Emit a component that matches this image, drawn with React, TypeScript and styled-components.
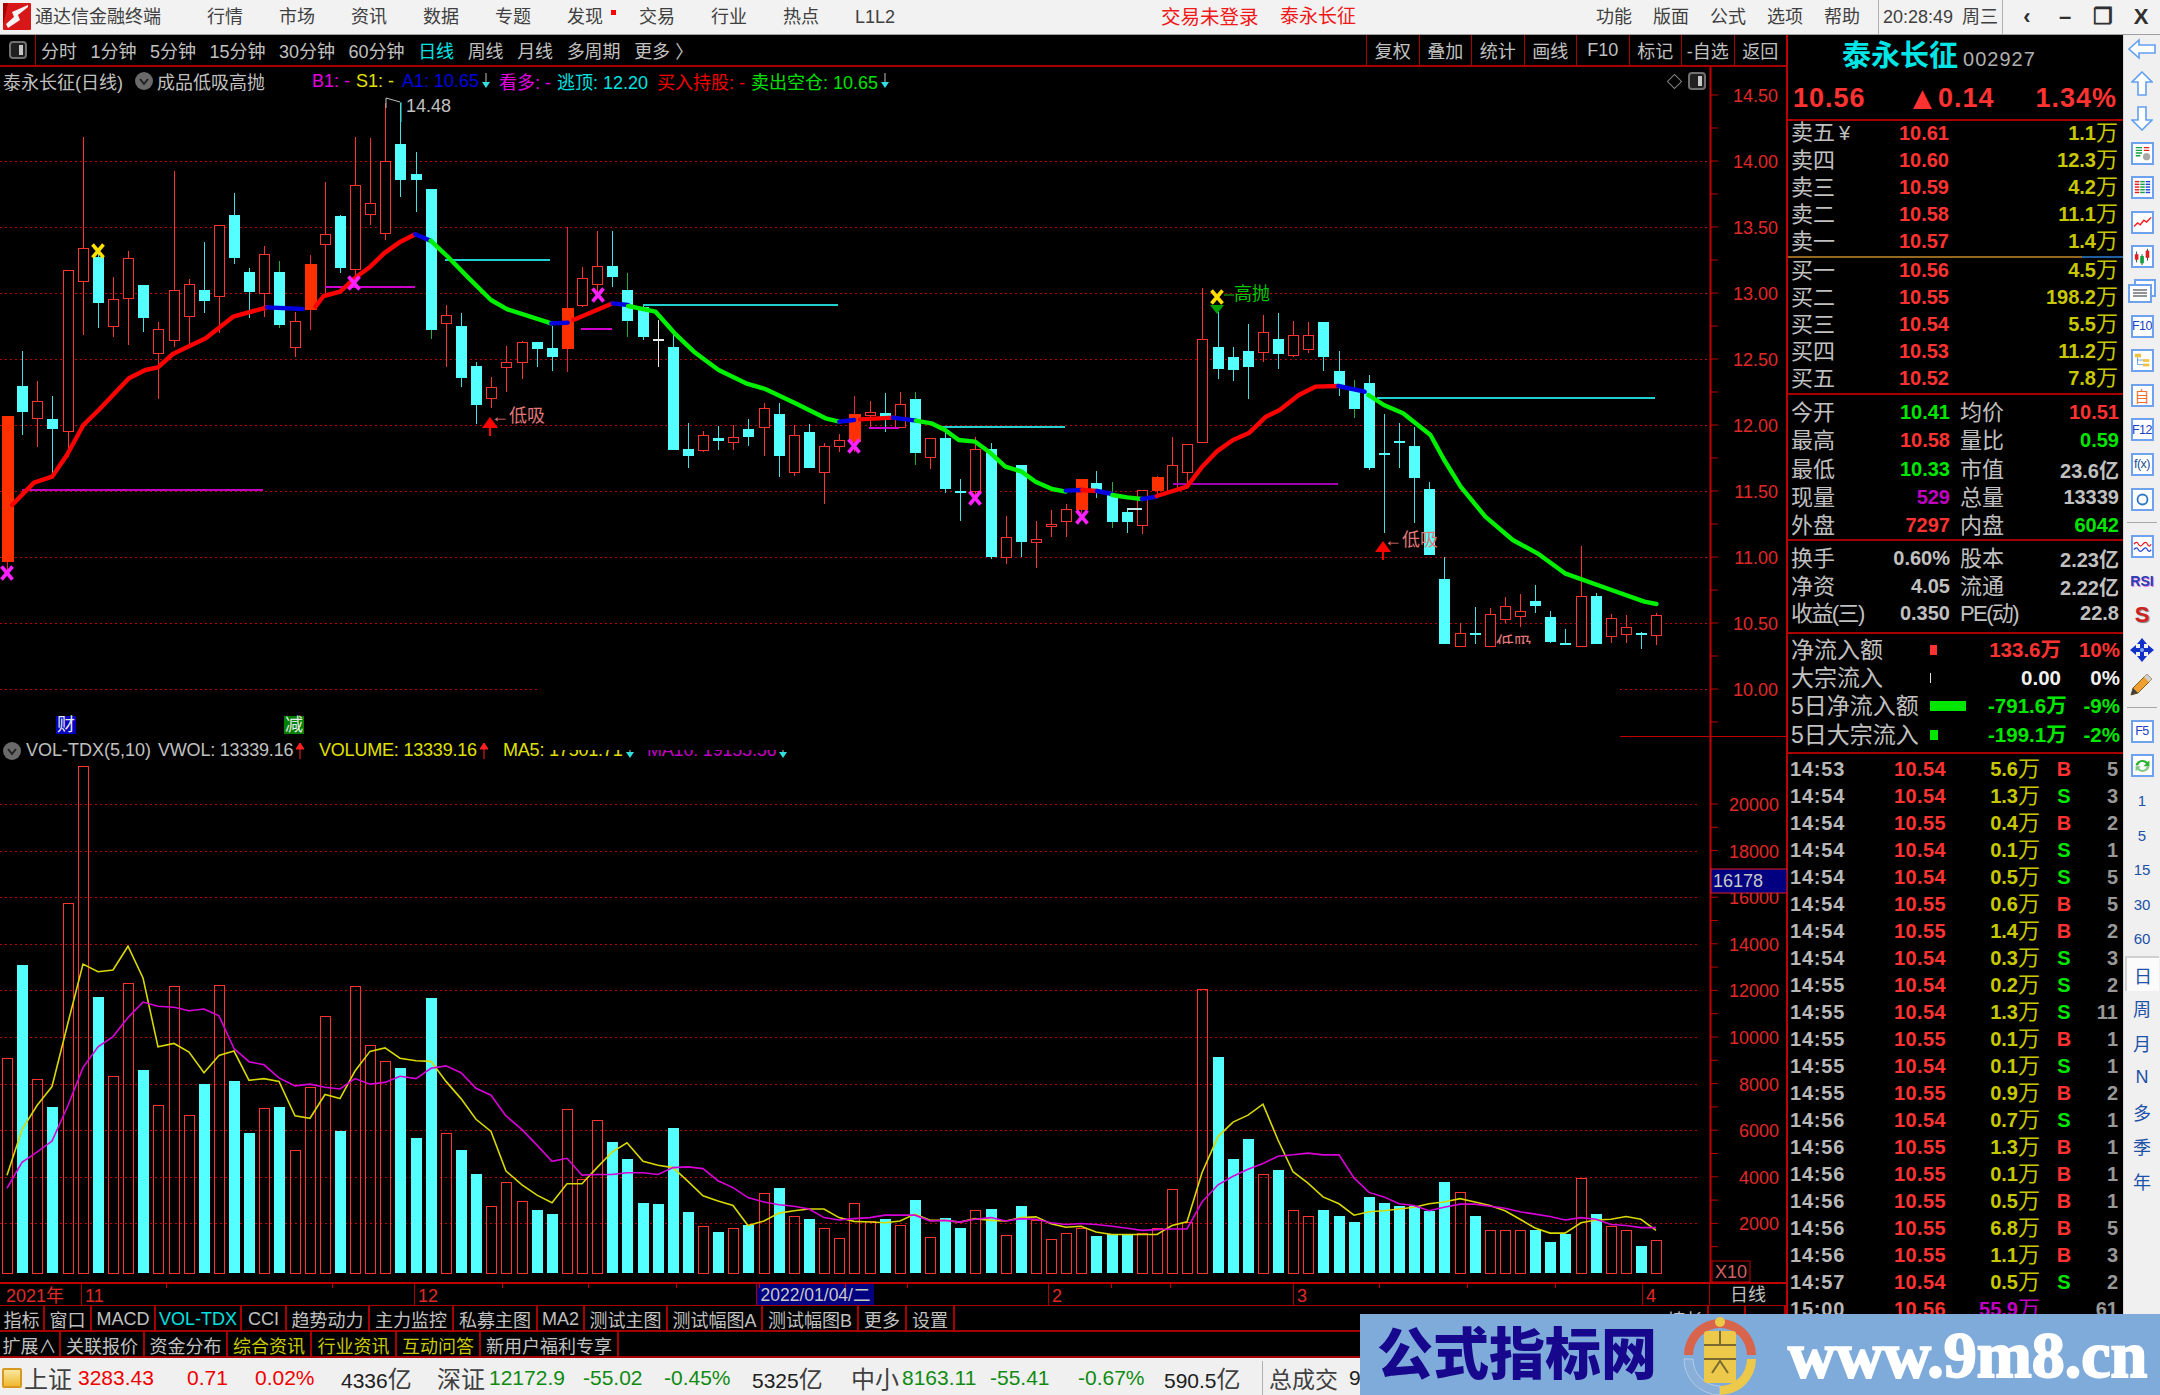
import React from "react";
import styled, { createGlobalStyle } from "styled-components";

const SANS = `"Liberation Sans", "Noto Sans CJK SC", sans-serif`;
const RED = "#ff3232";
const GREEN = "#00e600";
const OLIVE = "#c8c800";
const GRAY = "#c0c0c0";
const LINE = "#a80000";
const CYAN = "#54ffff";

const GlobalStyle = createGlobalStyle`
  html, body { margin: 0; padding: 0; background: #000; overflow: hidden; }
  * { box-sizing: border-box; }
`;

// [kind, high, top, bottom, low] read off the chart, u: hollow red, f: filled red,
// d: cyan, g: cyan with green wick, w: white doji
type Candle = [string, number, number, number, number];

const CANDLES_A: Candle[] = [
  ["f", 977, 977, 1417, 1440], ["d", 783, 887, 967, 1035], ["u", 873, 933, 985, 1070], ["d", 918, 986, 1017, 1148],
  ["u", 541, 541, 1025, 1100], ["u", 140, 474, 574, 735], ["d", 490, 500, 638, 715], ["u", 562, 627, 710, 742],
  ["u", 482, 506, 624, 765], ["d", 585, 585, 684, 725], ["u", 695, 718, 790, 927], ["u", 243, 600, 750, 770],
  ["u", 568, 582, 678, 765], ["d", 455, 600, 634, 670], ["u", 407, 407, 620, 728], ["d", 310, 374, 504, 522],
  ["d", 535, 545, 607, 685], ["u", 468, 492, 610, 680], ["g", 514, 545, 706, 715], ["u", 665, 695, 772, 800],
  ["f", 495, 523, 660, 720], ["u", 275, 434, 462, 620], ["d", 375, 378, 535, 550], ["u", 140, 285, 538, 560],
  ["u", 145, 340, 372, 405], ["u", 40, 213, 430, 450], ["d", 40, 163, 269, 320], ["d", 185, 253, 269, 365],
  ["g", 298, 298, 720, 748], ["u", 645, 677, 700, 832], ["d", 670, 707, 863, 890], ["d", 815, 829, 945, 1003],
  ["u", 860, 893, 925, 955], ["u", 767, 816, 831, 905], ["u", 752, 757, 818, 868], ["d", 755, 757, 778, 832],
  ["d", 708, 775, 801, 842], ["f", 410, 654, 778, 845], ["u", 530, 565, 646, 650], ["u", 423, 528, 584, 610],
  ["d", 423, 527, 562, 590], ["g", 550, 600, 693, 742], ["d", 645, 650, 742, 750], ["w", 690, 748, 750, 832],
  ["d", 730, 770, 1080, 1080], ["d", 1000, 1077, 1098, 1135], ["u", 1022, 1037, 1080, 1085], ["d", 1008, 1045, 1052, 1080],
  ["u", 1005, 1042, 1056, 1080], ["d", 987, 1018, 1040, 1068], ["u", 940, 956, 1012, 1098], ["d", 938, 973, 1098, 1160],
  ["u", 1005, 1037, 1147, 1157], ["d", 1003, 1027, 1135, 1135], ["u", 1060, 1068, 1147, 1242], ["u", 1032, 1050, 1070, 1085],
  ["f", 918, 973, 1055, 1085],
];

const CANDLES_B: Candle[] = [
  ["u", 392, 428, 436, 475], ["d", 370, 428, 441, 485], ["u", 365, 402, 472, 475], ["g", 365, 388, 548, 585],
  ["u", 505, 505, 562, 598], ["d", 490, 505, 657, 670], ["d", 627, 662, 669, 752], ["u", 500, 537, 665, 690],
  ["d", 518, 537, 860, 868], ["u", 738, 803, 862, 882], ["d", 586, 586, 815, 860], ["u", 752, 808, 818, 895],
  ["u", 720, 762, 769, 802], ["u", 702, 718, 755, 802], ["f", 626, 626, 720, 730], ["d", 603, 640, 662, 685],
  ["g", 635, 675, 756, 775], ["d", 715, 725, 756, 788], ["u", 660, 660, 765, 792], ["f", 618, 622, 662, 680],
  ["u", 500, 587, 660, 665], ["u", 523, 523, 606, 650], ["u", 55, 208, 517, 517], ["d", 125, 230, 297, 328],
  ["d", 230, 262, 301, 332], ["d", 163, 243, 292, 388], ["u", 135, 186, 246, 275], ["d", 130, 208, 252, 297],
  ["u", 153, 195, 255, 260], ["u", 157, 195, 237, 248], ["d", 157, 157, 261, 302], ["d", 243, 302, 350, 378],
  ["g", 330, 356, 418, 445], ["d", 316, 338, 595, 600], ["d", 432, 550, 556, 788], ["d", 460, 514, 518, 595],
  ["d", 470, 527, 625, 760], ["d", 635, 658, 855, 855], ["d", 860, 928, 1122, 1122], ["u", 1060, 1091, 1130, 1130],
  ["d", 1012, 1090, 1096, 1122], ["u", 1015, 1033, 1130, 1130], ["u", 982, 1010, 1048, 1058], ["u", 972, 1023, 1038, 1070],
  ["d", 945, 992, 1008, 1030], ["d", 1022, 1040, 1115, 1120], ["d", 1076, 1118, 1122, 1122], ["u", 828, 979, 1130, 1130],
  ["d", 968, 978, 1122, 1122], ["u", 1032, 1046, 1100, 1120], ["u", 1036, 1073, 1092, 1120], ["d", 1085, 1090, 1094, 1138],
  ["u", 1030, 1037, 1096, 1125],
];

const VOL_A = [925, 653, 985, 1063, 475, 78, 745, 977, 707, 958, 1060, 714, 1090, 998, 711, 988, 1140, 1068, 1063, 1190, 1007, 802, 1133, 714, 885, 933, 950, 1155, 748, 1142, 1190, 1258, 1352, 1282, 1338, 1363, 1376, 1072, 1275, 1103, 1166, 1216, 1342, 1346, 1124, 1368, 1412, 1428, 1417, 1407, 1316, 1298, 1381, 1390, 1417, 1447, 1343];
const VOL_B = [1395, 1390, 1408, 1333, 1442, 1386, 1416, 1364, 1359, 1438, 1350, 1392, 1448, 1430, 1416, 1437, 1434, 1434, 1430, 1416, 1304, 1400, 723, 918, 1216, 1158, 1260, 1246, 1364, 1382, 1363, 1381, 1398, 1324, 1342, 1351, 1352, 1365, 1281, 1312, 1381, 1421, 1421, 1421, 1420, 1456, 1433, 1273, 1376, 1412, 1422, 1468, 1452];

const MA5 = [1262, 1130, 1060, 1005, 820, 650, 672, 667, 598, 690, 890, 880, 905, 965, 915, 902, 987, 982, 990, 1090, 1097, 1028, 1040, 960, 903, 893, 923, 930, 932, 990, 1040, 1100, 1135, 1250, 1290, 1320, 1342, 1287, 1287, 1240, 1195, 1168, 1222, 1233, 1240, 1280, 1322, 1337, 1350, 1408, 1395, 1372, 1365, 1360, 1360, 1385, 1396,
  1398, 1400, 1395, 1375, 1393, 1393, 1398, 1388, 1393, 1395, 1385, 1383, 1403, 1413, 1410, 1427, 1434, 1434, 1434, 1434, 1408, 1397, 1255, 1150, 1108, 1088, 1056, 1160, 1252, 1285, 1325, 1345, 1378, 1368, 1365, 1360, 1355, 1345, 1340, 1330, 1340, 1350, 1365, 1390, 1415, 1430, 1430, 1400, 1392, 1390, 1382, 1390, 1422];
const MA10 = [1300, 1225, 1195, 1163, 1060, 950, 890, 860, 805, 760, 772, 775, 785, 780, 800, 895, 933, 942, 980, 1003, 998, 1007, 1012, 982, 998, 993, 975, 982, 952, 945, 965, 1010, 1030, 1090, 1130, 1175, 1222, 1213, 1262, 1260, 1260, 1255, 1255, 1260, 1240, 1238, 1243, 1278, 1298, 1327, 1340, 1348, 1352, 1360, 1385, 1392, 1388,
  1385, 1378, 1378, 1378, 1395, 1393, 1398, 1390, 1385, 1395, 1388, 1390, 1400, 1405, 1402, 1405, 1410, 1416, 1422, 1420, 1418, 1418, 1340, 1290, 1265, 1245, 1228, 1207, 1203, 1198, 1203, 1203, 1270, 1312, 1325, 1345, 1350, 1365, 1355, 1346, 1346, 1352, 1358, 1368, 1375, 1382, 1392, 1385, 1390, 1405, 1408, 1414, 1414];

// thick trend line pieces, the first block in left-half coordinates, the second in right-half ones
type Seg = { c: string; p: number[][] };
const TREND_A: Seg[] = [
  { c: "#ff0000", p: [[22, 1245], [62, 1178], [95, 1160], [122, 1095], [152, 1005], [180, 960], [235, 865], [265, 840], [288, 832], [315, 792], [375, 745], [425, 680], [487, 652]] },
  { c: "#0000e0", p: [[487, 652], [552, 657]] },
  { c: "#ff0000", p: [[575, 650], [590, 618], [620, 605], [650, 560], [675, 530], [700, 490], [730, 455], [757, 433]] },
  { c: "#0000e0", p: [[757, 433], [785, 452]] },
  { c: "#00f000", p: [[785, 452], [815, 498], [855, 565], [895, 630], [925, 658], [1005, 700]] },
  { c: "#0000e0", p: [[1005, 700], [1035, 698]] },
  { c: "#ff0000", p: [[1045, 690], [1117, 640]] },
  { c: "#0000e0", p: [[1117, 640], [1145, 645]] },
  { c: "#00f000", p: [[1145, 648], [1195, 665], [1230, 730], [1265, 785], [1310, 840], [1360, 880], [1395, 897], [1450, 940], [1505, 985], [1530, 995]] },
  { c: "#0000e0", p: [[1530, 995], [1557, 990]] },
];
const TREND_B: Seg[] = [
  { c: "#ff0000", p: [[0, 448], [60, 443]] },
  { c: "#0000e0", p: [[60, 443], [102, 452]] },
  { c: "#00f000", p: [[102, 452], [130, 460], [155, 480], [180, 510], [210, 515], [235, 545], [265, 590], [295, 605], [320, 635], [350, 657], [375, 665]] },
  { c: "#0000e0", p: [[375, 662], [405, 660]] },
  { c: "#ff0000", p: [[405, 660], [432, 663]] },
  { c: "#0000e0", p: [[432, 663], [460, 672]] },
  { c: "#00f000", p: [[460, 675], [487, 682], [514, 687]] },
  { c: "#0000e0", p: [[514, 687], [541, 680]] },
  { c: "#ff0000", p: [[541, 678], [596, 650], [624, 590], [650, 545], [680, 510], [710, 488], [740, 440], [765, 420], [800, 375], [830, 350], [872, 348]] },
  { c: "#0000e0", p: [[872, 348], [920, 365]] },
  { c: "#00f000", p: [[927, 375], [955, 405], [990, 430], [1040, 495], [1065, 570], [1095, 650], [1140, 740], [1190, 810], [1235, 850], [1285, 910], [1370, 960], [1430, 995], [1452, 1002]] },
];

const barX = (i: number) => Math.round(7.1 + 15.13 * i);
const xA = (z: number) => z / 1.823;
const yA = (z: number) => 90 + z / 3;
const xB = (z: number) => 860 + z / 1.823;
const yB = (z: number) => 270 + z / 3;

const PRICE_LABELS = ["14.50", "14.00", "13.50", "13.00", "12.50", "12.00", "11.50", "11.00", "10.50", "10.00"];
const VOL_LABELS = ["20000", "18000", "16000", "14000", "12000", "10000", "8000", "6000", "4000", "2000"];
const volLabelY = (n: number) => 804 + n * 46.6;

const CandleMark: React.FC<{ c: Candle; i: number; y: (z: number) => number }> = ({ c, i, y }) => {
  const [kind, hi, top, bot, lo] = c;
  const x = barX(i);
  const cx = x + 0.5;
  const wick = kind === "u" ? "#ff3232" : kind === "f" ? "#e8204a" : kind === "g" ? "#20b040" : kind === "w" ? "#e8e8e8" : "#40e0e0";
  if (kind === "u") {
    return (
      <g>
        <line x1={cx} x2={cx} y1={y(hi)} y2={y(top)} stroke={wick} />
        <line x1={cx} x2={cx} y1={y(bot)} y2={y(lo)} stroke={wick} />
        <rect x={x - 4.5} y={y(top)} width={10} height={y(bot) - y(top)} fill="#000" stroke="#ff3232" />
      </g>
    );
  }
  const fill = kind === "f" ? "#ff3000" : kind === "w" ? "#e8e8e8" : CYAN;
  return (
    <g>
      <line x1={cx} x2={cx} y1={y(hi)} y2={y(lo)} stroke={wick} />
      <rect x={x - 5} y={y(top)} width={kind === "f" ? 12 : 11} height={Math.max(y(bot) - y(top), 2)} fill={fill} />
    </g>
  );
};

const Cross: React.FC<{ x: number; y: number; c: string }> = ({ x, y, c }) => (
  <path d={`M${x - 5.5} ${y - 6.5}L${x + 5.5} ${y + 6.5}M${x + 5.5} ${y - 6.5}L${x - 5.5} ${y + 6.5}`} stroke={c} strokeWidth={3.6} fill="none" />
);

const BuyArrow: React.FC<{ x: number; y: number }> = ({ x, y }) => (
  <g>
    <polygon points={`${x},${y} ${x + 8},${y + 11} ${x - 8},${y + 11}`} fill="#ff0000" />
    <line x1={x} x2={x} y1={y + 10} y2={y + 19} stroke="#ff0000" strokeWidth={2} />
  </g>
);

const PricePane: React.FC = () => (
  <ChartSvg width={1787} height={670} viewBox="0 67 1787 670">
    <g stroke="#c00000" strokeDasharray="2 3" shapeRendering="crispEdges">
      {[161, 227, 293, 359, 425, 491, 557, 623].map((y) => (
        <line key={y} x1={0} x2={1708} y1={y + 0.5} y2={y + 0.5} />
      ))}
      <line x1={0} x2={540} y1={689.5} y2={689.5} />
      <line x1={1620} x2={1708} y1={689.5} y2={689.5} />
    </g>
    <g shapeRendering="crispEdges">
      {CANDLES_A.map((c, i) => (
        <CandleMark key={i} c={c} i={i} y={yA} />
      ))}
      {CANDLES_B.map((c, i) => (
        <CandleMark key={i} c={c} i={i + 57} y={yB} />
      ))}
    </g>
    <g strokeWidth={2} shapeRendering="crispEdges">
      <line x1={xA(40)} x2={xA(480)} y1={490} y2={490} stroke="#c000c0" />
      <line x1={xA(592)} x2={xA(757)} y1={287} y2={287} stroke="#d000d0" />
      <line x1={xA(812)} x2={xA(1003)} y1={260} y2={260} stroke="#20d0d0" />
      <line x1={xA(1060)} x2={xA(1115)} y1={329} y2={329} stroke="#d000d0" />
      <line x1={xA(1172)} x2={xA(1528)} y1={305} y2={305} stroke="#20d0d0" />
      <line x1={xB(17)} x2={xB(72)} y1={428} y2={428} stroke="#d000d0" />
      <line x1={xB(150)} x2={xB(373)} y1={427} y2={427} stroke="#20d0d0" />
      <line x1={xB(570)} x2={xB(871)} y1={484} y2={484} stroke="#a000b0" />
      <line x1={xB(942)} x2={xB(1450)} y1={398} y2={398} stroke="#20d0d0" />
      <line x1={xB(487)} x2={xB(514)} y1={509} y2={509} stroke="#c0e8e8" />
    </g>
    <g fill="none" strokeWidth={4.4} strokeLinecap="round" strokeLinejoin="round">
      {TREND_A.map((s, i) => (
        <polyline key={i} stroke={s.c} points={s.p.map(([x, y]) => `${xA(x)},${yA(y)}`).join(" ")} />
      ))}
      {TREND_B.map((s, i) => (
        <polyline key={i} stroke={s.c} points={s.p.map(([x, y]) => `${xB(x)},${yB(y)}`).join(" ")} />
      ))}
    </g>
    <Cross x={7} y={573} c="#ff20ff" />
    <Cross x={354} y={283} c="#ff20ff" />
    <Cross x={598} y={295} c="#ff20ff" />
    <Cross x={854} y={446} c="#ff20ff" />
    <Cross x={975} y={498} c="#ff20ff" />
    <Cross x={1082} y={517} c="#ff20ff" />
    <Cross x={98} y={251} c="#ffe000" />
    <polygon points="1210,305 1224,305 1217,314" fill="#00a000" />
    <Cross x={1217} y={297} c="#ffe000" />
    <line x1={1224} x2={1234} y1={295} y2={295} stroke="#00c000" />
    <ChartText x={1234} y={300} fill="#00c800">高抛</ChartText>
    <BuyArrow x={490} y={417} />
    <BuyArrow x={1383} y={541} />
    <ChartText x={491} y={422} fill="#e07878">←低吸</ChartText>
    <ChartText x={1384} y={546} fill="#e07878">←低吸</ChartText>
    <clipPath id="erased">
      <rect x={1480} y={620} width={60} height={24} />
    </clipPath>
    <g clipPath="url(#erased)">
      <ChartText x={1496} y={650} fill="#e07878">低吸</ChartText>
    </g>
    <polyline points="386,108 386,98 400,102" fill="none" stroke={GRAY} />
    <line x1={401} x2={401} y1={102} y2={122} stroke="#40d8d8" />
    <ChartText x={406} y={112} fill={GRAY}>14.48</ChartText>
    <rect x={56} y={716} width={20} height={18} fill="#0000c0" />
    <ChartText x={57} y={731} fill="#e8e8e8">财</ChartText>
    <rect x={284} y={716} width={20} height={18} fill="#008000" />
    <ChartText x={285} y={731} fill="#e8e8e8">减</ChartText>
    <g stroke="#c00000">
      <line x1={1710.5} x2={1710.5} y1={67} y2={737} strokeWidth={2} />
      <line x1={1620} x2={1787} y1={737} y2={737} strokeWidth={2} />
      {Array.from({ length: 20 }, (_, i) => (
        <line key={i} x1={1711} x2={1718} y1={95 + 33 * i} y2={95 + 33 * i} />
      ))}
    </g>
    {PRICE_LABELS.map((t, i) => (
      <ChartText key={t} x={1778} y={102 + 66 * i} fill="#e02828" textAnchor="end">{t}</ChartText>
    ))}
  </ChartSvg>
);

const VolumePane: React.FC = () => {
  const volY = (z: number) => 740 + z / 2.9;
  const bars = [...CANDLES_A, ...CANDLES_B].map((c, i) => ({
    hollow: c[0] === "u" || c[0] === "f",
    top: volY(i < 57 ? VOL_A[i] : VOL_B[i - 57]),
    x: barX(i),
  }));
  const linePoints = (s: number[]) => s.map((z, i) => `${barX(i)},${volY(z)}`).join(" ");
  return (
    <ChartSvg width={1787} height={545} viewBox="0 737 1787 545">
      <g stroke="#c00000" strokeDasharray="2 3" shapeRendering="crispEdges">
        {VOL_LABELS.map((_, i) => (
          <line key={i} x1={0} x2={1700} y1={Math.round(volLabelY(i)) + 0.5} y2={Math.round(volLabelY(i)) + 0.5} />
        ))}
      </g>
      <g shapeRendering="crispEdges">
        {bars.map((b, i) =>
          b.hollow ? (
            <rect key={i} x={b.x - 4.5} y={b.top} width={10} height={1273 - b.top} fill="none" stroke="#ff3232" />
          ) : (
            <rect key={i} x={b.x - 5} y={b.top} width={11} height={1273 - b.top} fill={CYAN} />
          )
        )}
      </g>
      <polyline points={linePoints(MA5)} fill="none" stroke="#d8d800" strokeWidth={1.6} />
      <polyline points={linePoints(MA10)} fill="none" stroke="#d800d8" strokeWidth={1.6} />
      <g stroke="#c00000">
        <line x1={1710.5} x2={1710.5} y1={737} y2={1282} strokeWidth={2} />
        {Array.from({ length: 20 }, (_, i) => (
          <line key={i} x1={1711} x2={1718} y1={804 + 23.3 * i} y2={804 + 23.3 * i} />
        ))}
      </g>
      {VOL_LABELS.map((t, i) => (
        <ChartText key={t} x={1779} y={volLabelY(i) + 7} fill="#e02828" textAnchor="end">{t}</ChartText>
      ))}
      <rect x={1711} y={869} width={76} height={24} fill="#000080" stroke="#e02020" />
      <ChartText x={1713} y={887} fill="#c8c8c8">16178</ChartText>
      <rect x={1712} y={1261} width={38} height={21} fill="#000" stroke="#c00000" />
      <ChartText x={1715} y={1278} fill="#d06060">X10</ChartText>
    </ChartSvg>
  );
};

const ToggleIcon: React.FC = () => (
  <svg width={18} height={18} viewBox="0 0 18 18">
    <rect x={1} y={1} width={16} height={16} rx={3} fill="#202020" stroke="#707070" strokeWidth={2} />
    <rect x={10} y={4} width={4} height={10} fill="#c8c8c8" />
  </svg>
);

const Chevron: React.FC = () => (
  <svg width={18} height={18} viewBox="0 0 18 18">
    <circle cx={9} cy={9} r={9} fill="#6a6a6a" />
    <path d="M5 7l4 5 4-5" fill="none" stroke="#222" strokeWidth={2} />
  </svg>
);

const Flow: React.FC<{ up?: boolean }> = ({ up }) => (
  <FlowMark width={8} height={16} viewBox="0 0 8 16">
    {up ? (
      <g fill="#ff2020" stroke="#ff2020">
        <line x1={4} x2={4} y1={4} y2={16} />
        <polygon points="4,0 8,6 0,6" />
      </g>
    ) : (
      <g>
        <line x1={4} x2={4} y1={0} y2={12} stroke="#c0c0c0" />
        <polygon points="0,9 8,9 4,15" fill="#30e0e0" />
      </g>
    )}
  </FlowMark>
);

const Logo: React.FC = () => (
  <svg width={28} height={27} viewBox="0 0 28 27">
    <rect width={28} height={27} rx={1} fill="#d81818" />
    <path d="M25 2L9 9l2 5-8 7 2 4 12-8-2-5 10-8z" fill="#f4f4f4" />
    <path d="M0 0h5l-5 22z" fill="#a80000" />
  </svg>
);

const ArrowIcon: React.FC<{ dir: "left" | "up" | "down" }> = ({ dir }) => {
  const pts = {
    left: "1,11 11,2 11,7 27,7 27,15 11,15 11,20",
    up: "11,1 21,11 15,11 15,24 7,24 7,11 1,11",
    down: "7,1 15,1 15,14 21,14 11,24 1,14 7,14",
  }[dir];
  return (
    <svg width={dir === "left" ? 28 : 22} height={25} viewBox={dir === "left" ? "0 -1 28 25" : "0 0 22 25"}>
      <polygon points={pts} fill="#fff" stroke="#62a0f0" strokeWidth={1.6} />
    </svg>
  );
};

const ICON_ROWS = {
  list: (
    <>
      <path d="M3 4h7M3 7h7M3 10h7M3 13h5" stroke="#10a040" strokeWidth={1.5} />
      <path d="M12 4h6M12 7h6" stroke="#e02020" strokeWidth={1.5} />
      <circle cx={15} cy={14} r={4} fill="#a8a8a8" />
    </>
  ),
  grid: (
    <>
      {[4, 7, 10, 13, 16].map((y) => (
        <g key={y} strokeWidth={1.6}>
          <line x1={2} x2={7} y1={y} y2={y} stroke="#e02020" />
          <line x1={8} x2={13} y1={y} y2={y} stroke="#10a040" />
          <line x1={14} x2={19} y1={y} y2={y} stroke="#2040e0" />
        </g>
      ))}
    </>
  ),
  line: <polyline points="1,15 5,11 8,13 12,8 15,10 20,5" fill="none" stroke="#ff2020" strokeWidth={1.6} />,
  candle: (
    <>
      <path d="M4 5v12M10 8v12M16 2v13" stroke="#303030" />
      <rect x={2} y={8} width={4} height={6} fill="#e02020" />
      <rect x={8} y={10} width={4} height={8} fill="#10a040" />
      <rect x={14} y={4} width={4} height={8} fill="#e02020" />
    </>
  ),
  tree: (
    <>
      <rect x={2} y={3} width={7} height={4} fill="#f0c040" />
      <rect x={11} y={9} width={7} height={3} fill="#f0c040" />
      <rect x={11} y={14} width={7} height={3} fill="#f0c040" />
      <path d="M5 7v8h6M5 10h6" fill="none" stroke="#60a0e0" />
    </>
  ),
  ring: <circle cx={10.5} cy={10.5} r={5.5} fill="none" stroke="#2a78c8" strokeWidth={2} />,
  wave: (
    <>
      <path d="M1 8q3-4 5 0t5 0 5 0 4 0" fill="none" stroke="#e02020" strokeWidth={1.4} />
      <path d="M1 14q3-4 5 0t5 0 5 0 4 0" fill="none" stroke="#2040d0" strokeWidth={1.4} />
    </>
  ),
};

const StackIcon: React.FC = () => (
  <svg width={30} height={25} viewBox="0 0 30 25">
    <rect x={8} y={1} width={20} height={16} fill="#fff" stroke="#6ea2ee" strokeWidth={2} />
    <rect x={2} y={6} width={22} height={17} fill="#fff" stroke="#6ea2ee" strokeWidth={2} />
    <path d="M6 11h14M6 14h14M6 17h14" stroke="#707070" strokeWidth={1.5} />
  </svg>
);

const MoveIcon: React.FC = () => (
  <svg width={26} height={26} viewBox="0 0 26 26">
    <path d="M13 1l5 6h-3v4h4V8l6 5-6 5v-3h-4v4h3l-5 6-5-6h3v-4H7v3l-6-5 6-5v3h4V7H8z" fill="#1030c8" />
    <circle cx={13} cy={13} r={2} fill="#80a8f0" />
  </svg>
);

const PencilIcon: React.FC = () => (
  <svg width={26} height={26} viewBox="0 0 26 26">
    <path d="M2 24l2-7L18 3l5 5L9 22z" fill="#f0a030" stroke="#806020" />
    <path d="M18 3l5 5-3 3-5-5z" fill="#d0d0d0" />
    <path d="M2 24l2-7 5 5z" fill="#404040" />
  </svg>
);

const RefreshIcon: React.FC = () => (
  <svg width={19} height={19} viewBox="0 0 22 22">
    <path d="M3 11a8 7 0 0 1 14-4l2-2v7h-7l3-3a5 5 0 0 0-9 2z" fill="#30b030" />
    <path d="M19 12a8 7 0 0 1-14 4l-2 2v-6h6l-2 2a5 5 0 0 0 9-2z" fill="#80c880" />
  </svg>
);

const PeriodIcon: React.FC<{ kind: keyof typeof ICON_ROWS }> = ({ kind }) => (
  <IconBox>
    <svg width={19} height={19} viewBox="0 0 21 21">{ICON_ROWS[kind]}</svg>
  </IconBox>
);

const ASKS = [
  ["卖五", "¥", "10.61", "1.1"], ["卖四", "", "10.60", "12.3"], ["卖三", "", "10.59", "4.2"], ["卖二", "", "10.58", "11.1"], ["卖一", "", "10.57", "1.4"],
];
const BIDS = [
  ["买一", "", "10.56", "4.5"], ["买二", "", "10.55", "198.2"], ["买三", "", "10.54", "5.5"], ["买四", "", "10.53", "11.2"], ["买五", "", "10.52", "7.8"],
];
const STATS_1 = [
  ["今开", "10.41", GREEN, "均价", "10.51", RED], ["最高", "10.58", RED, "量比", "0.59", GREEN], ["最低", "10.33", GREEN, "市值", "23.6亿", GRAY],
  ["现量", "529", "#c000c0", "总量", "13339", GRAY], ["外盘", "7297", RED, "内盘", "6042", GREEN],
];
const STATS_2 = [
  ["换手", "0.60%", GRAY, "股本", "2.23亿", GRAY], ["净资", "4.05", GRAY, "流通", "2.22亿", GRAY], ["收益(三)", "0.350", GRAY, "PE(动)", "22.8", GRAY],
];
const FLOWS = [
  { label: "净流入额", bar: 7, barColor: RED, value: "133.6万", pct: "10%", color: RED },
  { label: "大宗流入", bar: 1, barColor: "#e0e0e0", value: "0.00", pct: "0%", color: "#f0f0f0" },
  { label: "5日净流入额", bar: 36, barColor: GREEN, value: "-791.6万", pct: "-9%", color: GREEN },
  { label: "5日大宗流入", bar: 8, barColor: GREEN, value: "-199.1万", pct: "-2%", color: GREEN },
];
const TICKS = [
  ["14:53", "10.54", "5.6", "B", "5"], ["14:54", "10.54", "1.3", "S", "3"], ["14:54", "10.55", "0.4", "B", "2"], ["14:54", "10.54", "0.1", "S", "1"],
  ["14:54", "10.54", "0.5", "S", "5"], ["14:54", "10.55", "0.6", "B", "5"], ["14:54", "10.55", "1.4", "B", "2"], ["14:54", "10.54", "0.3", "S", "3"],
  ["14:55", "10.54", "0.2", "S", "2"], ["14:55", "10.54", "1.3", "S", "11"], ["14:55", "10.55", "0.1", "B", "1"], ["14:55", "10.54", "0.1", "S", "1"],
  ["14:55", "10.55", "0.9", "B", "2"], ["14:56", "10.54", "0.7", "S", "1"], ["14:56", "10.55", "1.3", "B", "1"], ["14:56", "10.55", "0.1", "B", "1"],
  ["14:56", "10.55", "0.5", "B", "1"], ["14:56", "10.55", "6.8", "B", "5"], ["14:56", "10.55", "1.1", "B", "3"], ["14:57", "10.54", "0.5", "S", "2"],
  ["15:00", "10.56", "55.9", "", "61"],
];

const Wan: React.FC<{ value: string; color?: string }> = ({ value, color }) => (
  <Volume $color={color}>
    {value}
    <WanMark>万</WanMark>
  </Volume>
);

const QuoteRows: React.FC<{ rows: string[][] }> = ({ rows }) => (
  <>
    {rows.map((r) => (
      <QuoteRow key={r[0]}>
        <QuoteLabel>
          {r[0]}
          {r[1] && <Yuan>{r[1]}</Yuan>}
        </QuoteLabel>
        <Price>{r[2]}</Price>
        <Wan value={r[3]} />
      </QuoteRow>
    ))}
  </>
);

const StatRows: React.FC<{ rows: string[][]; $h: number }> = ({ rows, $h }) => (
  <>
    {rows.map((r) => (
      <StatRow key={r[0]} $h={$h}>
        <Label $tight={r[0].includes("(")}>{r[0]}</Label>
        <Stat $color={r[2]}>{r[1]}</Stat>
        <SecondLabel $tight={r[3].includes("(")}>{r[3]}</SecondLabel>
        <Stat $color={r[5]}>{r[4]}</Stat>
      </StatRow>
    ))}
  </>
);

const App: React.FC = () => {
  return (
    <Page>
      <GlobalStyle />
      <TitleBar>
        <Logo />
        <AppName>通达信金融终端</AppName>
        <MainMenu>
          {["行情", "市场", "资讯", "数据", "专题", "发现", "交易", "行业", "热点", "L1L2"].map((m) => (
            <MenuItem key={m}>
              {m}
              {m === "发现" && <RedDot />}
            </MenuItem>
          ))}
        </MainMenu>
        <LoginText>交易未登录</LoginText>
        <StockName>泰永长征</StockName>
        <SubMenu>
          {["功能", "版面", "公式", "选项", "帮助"].map((m) => (
            <SubMenuItem key={m}>{m}</SubMenuItem>
          ))}
        </SubMenu>
        <Clock>
          20:28:49<ClockDay>周三</ClockDay>
        </Clock>
        <WindowButton>‹</WindowButton>
        <WindowButton>–</WindowButton>
        <WindowButton>❐</WindowButton>
        <WindowButton>X</WindowButton>
      </TitleBar>

      <Body>
        <Main>
          <ToolBar>
            <ToggleCell>
              <ToggleIcon />
            </ToggleCell>
            <PeriodList>
              {["分时", "1分钟", "5分钟", "15分钟", "30分钟", "60分钟", "日线", "周线", "月线", "多周期", "更多 〉"].map((p) => (
                <Period key={p} $active={p === "日线"}>{p}</Period>
              ))}
            </PeriodList>
            <ToolGroup>
              {["复权", "叠加", "统计", "画线", "F10", "标记", "-自选", "返回"].map((t) => (
                <ToolButton key={t}>{t}</ToolButton>
              ))}
            </ToolGroup>
          </ToolBar>

          <Pane>
            <PricePane />
            <PaneHeader $h={28}>
              <HeaderTitle>泰永长征(日线)</HeaderTitle>
              <Chevron />
              <FormulaName>成品低吸高抛</FormulaName>
              <Legend $w={44} $color="#e000e0">B1: -</Legend>
              <Legend $w={46} $color="#e0e000">S1: -</Legend>
              <Legend $w={97} $color="#0000e0">A1: 10.65<Flow /></Legend>
              <Legend $w={58} $color="#e000e0">看多: -</Legend>
              <Legend $w={100} $color="#00e0e0">逃顶: 12.20</Legend>
              <Legend $w={94} $color="#f00000">买入持股: -</Legend>
              <Legend $w={150} $color="#00e000">卖出空仓: 10.65<Flow /></Legend>
              <CornerTools>
                <Diamond />
                <ToggleIcon />
              </CornerTools>
            </PaneHeader>
          </Pane>

          <Pane>
            <VolumePane />
            <PaneHeader $h={27}>
              <Chevron />
              <VolName>VOL-TDX(5,10)</VolName>
              <VolLegend $color={GRAY} $w={161}>VWOL: 13339.16<Flow up /></VolLegend>
              <VolLegend $color="#e0e000" $w={184}>VOLUME: 13339.16<Flow up /></VolLegend>
              <VolLegend $color="#e0e000" $w={144}>MA5: 17501.71<Flow /></VolLegend>
              <VolLegend $color="#c000c0" $w={160}>MA10: 19155.56<Flow /></VolLegend>
              <HeaderMask />
            </PaneHeader>
          </Pane>

          <DateRow>
            {[166, 332, 502, 588, 676, 759, 845, 907, 1111, 1170, 1379, 1467, 1555].map((x) => (
              <DateTick key={x} $x={x} />
            ))}
            <DateCell $w={82}>2021年</DateCell>
            <DateCell $w={333}>11</DateCell>
            <DateCell $w={342}>12</DateCell>
            <CursorDate>2022/01/04/二</CursorDate>
            <DateCell $w={175} />
            <DateCell $w={245}>2</DateCell>
            <DateCell $w={349}>3</DateCell>
            <DateCell $w={67}>4</DateCell>
            <DateKind>日线</DateKind>
          </DateRow>
          <TabRow>
            {[
              ["指标", 45], ["窗口", 47], ["MACD", 64], ["VOL-TDX", 86], ["CCI", 45], ["趋势动力", 83], ["主力监控", 84],
              ["私募主图", 84], ["MA2", 47], ["测试主图", 83], ["测试幅图A", 95], ["测试幅图B", 96], ["更多", 48], ["设置", 48],
            ].map(([t, w]) => (
              <TabCell key={t} $w={w as number} $color={t === "VOL-TDX" ? "#00e0e0" : undefined}>{t}</TabCell>
            ))}
            <FitTabs>
              <TabCell $w={45}>填长</TabCell>
              <TabCell $w={37} />
              <TabCell $w={40} />
            </FitTabs>
          </TabRow>
          <TabRow>
            {[
              ["扩展∧", 61, ""], ["关联报价", 84, ""], ["资金分布", 83, ""], ["综合资讯", 84, OLIVE], ["行业资讯", 85, OLIVE],
              ["互动问答", 84, OLIVE], ["新用户福利专享", 138, ""],
            ].map(([t, w, c]) => (
              <TabCell key={t} $w={w as number} $color={(c as string) || undefined}>{t}</TabCell>
            ))}
          </TabRow>
        </Main>

        <Panel>
          <PanelHead>
            <NameRow>
              <BigName>泰永长征</BigName>
              <Code>002927</Code>
            </NameRow>
            <PriceRow>
              <BigPrice>10.56</BigPrice>
              <BigPrice><Triangle>▲</Triangle>0.14</BigPrice>
              <BigPrice>1.34%</BigPrice>
            </PriceRow>
          </PanelHead>
          <QuoteRows rows={ASKS} />
          <MidLine />
          <QuoteBlock $h={137}>
            <QuoteRows rows={BIDS} />
          </QuoteBlock>
          <QuoteBlock $h={146} $pt={3.5}>
            <StatRows rows={STATS_1} $h={28.3} />
          </QuoteBlock>
          <QuoteBlock $h={93} $pt={2.5}>
            <StatRows rows={STATS_2} $h={28.2} />
          </QuoteBlock>
          <QuoteBlock $h={120}>
            {FLOWS.map((f) => (
              <FlowRow key={f.label}>
                <FlowLabel>{f.label}</FlowLabel>
                <FlowBar>
                  <FlowFill style={{ width: f.bar, background: f.barColor }} />
                </FlowBar>
                <FlowValue $color={f.color}>{f.value}</FlowValue>
                <FlowValue $color={f.color}>{f.pct}</FlowValue>
              </FlowRow>
            ))}
          </QuoteBlock>
          <TickList>
            {TICKS.map((t, i) => (
              <TickRow key={i}>
                <TickTime>{t[0]}</TickTime>
                <TickPrice>{t[1]}</TickPrice>
                <Wan value={t[2]} color={t[0] === "15:00" ? "#c000c0" : undefined} />
                <TickSide $buy={t[3] === "B"}>{t[3]}</TickSide>
                <TickCount>{t[4]}</TickCount>
              </TickRow>
            ))}
          </TickList>
        </Panel>

        <Side>
          <SideItem><ArrowIcon dir="left" /></SideItem>
          <SideItem><ArrowIcon dir="up" /></SideItem>
          <SideItem><ArrowIcon dir="down" /></SideItem>
          <SideItem><PeriodIcon kind="list" /></SideItem>
          <SideItem><PeriodIcon kind="grid" /></SideItem>
          <SideItem><PeriodIcon kind="line" /></SideItem>
          <SideItem><PeriodIcon kind="candle" /></SideItem>
          <SideItem><StackIcon /></SideItem>
          <SideItem><IconBox $text>F10</IconBox></SideItem>
          <SideItem><PeriodIcon kind="tree" /></SideItem>
          <SideItem><IconBox $color="#f07030">自</IconBox></SideItem>
          <SideItem><IconBox $text>F12</IconBox></SideItem>
          <SideItem><IconBox $text $color="#205090">f(x)</IconBox></SideItem>
          <SideItem><PeriodIcon kind="ring" /></SideItem>
          <SideRule />
          <SideItem><PeriodIcon kind="wave" /></SideItem>
          <SideItem><RsiMark>RSI</RsiMark></SideItem>
          <SideItem><DollarMark>S</DollarMark></SideItem>
          <SideItem><MoveIcon /></SideItem>
          <SideItem><PencilIcon /></SideItem>
          <SideRule />
          <SideItem><IconBox $text>F5</IconBox></SideItem>
          <SideItem><IconBox><RefreshIcon /></IconBox></SideItem>
          {["1", "5", "15", "30", "60"].map((n) => (
            <SideItem key={n}><SideNum>{n}</SideNum></SideItem>
          ))}
          <SideItem $active><SideChar>日</SideChar></SideItem>
          {["周", "月", "N", "多", "季", "年"].map((n) => (
            <SideItem key={n}><SideChar>{n}</SideChar></SideItem>
          ))}
        </Side>
      </Body>

      <StatusBar>
        <IndexIcon />
        <IndexCell $w={54} $cjk>上证</IndexCell>
        <IndexCell $w={109} $color="#f00000">3283.43</IndexCell>
        <IndexCell $w={68} $color="#f00000">0.71</IndexCell>
        <IndexCell $w={86} $color="#f00000">0.02%</IndexCell>
        <IndexCell $w={96}>4336<Thin>亿</Thin></IndexCell>
        <IndexCell $w={52} $cjk>深证</IndexCell>
        <IndexCell $w={94} $color="#108a10">12172.9</IndexCell>
        <IndexCell $w={81} $color="#108a10">-55.02</IndexCell>
        <IndexCell $w={88} $color="#108a10">-0.45%</IndexCell>
        <IndexCell $w={99}>5325<Thin>亿</Thin></IndexCell>
        <IndexCell $w={51} $cjk>中小</IndexCell>
        <IndexCell $w={88} $color="#108a10">8163.11</IndexCell>
        <IndexCell $w={88} $color="#108a10">-55.41</IndexCell>
        <IndexCell $w={86} $color="#108a10">-0.67%</IndexCell>
        <IndexCell $w={98}>590.5<Thin>亿</Thin></IndexCell>
        <TotalLabel>总成交</TotalLabel>
        <IndexCell $w={12}>9</IndexCell>
      </StatusBar>

      <Watermark>
        <WatermarkName>公式指标网</WatermarkName>
        <svg width={80} height={80} viewBox="0 0 80 80">
          <path d="M4 40a36 36 0 0 1 72 0h-9a27 27 0 0 0-54 0z" fill="#d8644c" />
          <path d="M4 44a36 36 0 0 0 36 36v-9a27 27 0 0 1-27-27z" fill="#8aafd8" stroke="#e0e8f0" strokeWidth={0.5} />
          <path d="M76 44a36 36 0 0 1-36 36v-9a27 27 0 0 0 27-27z" fill="#ecc94a" />
          <circle cx={40} cy={7} r={5} fill="#ecc94a" />
          <rect x={24} y={16} width={32} height={52} rx={3} fill="#ecc94a" />
          <path d="M24 30h32M24 44h32M40 16v14M32 58l8-12 8 12" fill="none" stroke="#7a6a30" strokeWidth={2} />
        </svg>
        <WatermarkUrl>www.9m8.cn</WatermarkUrl>
      </Watermark>
    </Page>
  );
};

export default App;

const Page = styled.div`
  position: relative;
  width: 2160px;
  height: 1395px;
  display: flex;
  flex-direction: column;
  overflow: hidden;
  background: #000;
  font-family: ${SANS};
  font-size: 18px;
  color: ${GRAY};
`;

const TitleBar = styled.div`
  height: 35px;
  flex: none;
  display: flex;
  align-items: center;
  padding: 0 0 1px 3px;
  background: #f2f2f2;
  border-bottom: 1px solid #a0a0a0;
  color: #404040;
  line-height: 32px;
`;

const AppName = styled.div`
  margin-left: 4px;
  width: 172px;
`;

const MainMenu = styled.div`
  display: flex;
  gap: 36px;
  width: 954px;
`;

const MenuItem = styled.div`
  position: relative;
  min-width: 36px;
`;

const RedDot = styled.span`
  position: absolute;
  left: 44px;
  top: 9px;
  width: 5px;
  height: 5px;
  background: #ff0000;
`;

const LoginText = styled.div`
  width: 119px;
  color: #f01818;
  font-size: 19.5px;
`;

const StockName = styled.div`
  width: 316px;
  color: #f01818;
  font-size: 19px;
`;

const SubMenu = styled.div`
  display: flex;
  gap: 21px;
  width: 282px;
`;

const SubMenuItem = styled.div`
  width: 36px;
`;

const Clock = styled.div`
  width: 125px;
  height: 34px;
  margin-right: 5px;
  display: flex;
  align-items: center;
  padding-left: 4px;
  border-left: 1px solid #b0b0b0;
  border-right: 1px solid #b0b0b0;
  font-size: 18px;
`;

const ClockDay = styled.span`
  margin-left: 9px;
`;

const WindowButton = styled.div`
  width: 38px;
  text-align: center;
  font-size: 22px;
  font-weight: 700;
  color: #303030;
`;

const Body = styled.div`
  flex: 1;
  min-height: 0;
  display: flex;
`;

const Main = styled.div`
  width: 1788px;
  flex: none;
  display: flex;
  flex-direction: column;
  border-right: 2px solid #c00000;
`;

const ToolBar = styled.div`
  height: 32px;
  flex: none;
  display: flex;
  align-items: center;
  border-bottom: 2px solid ${LINE};
`;

const ToggleCell = styled.div`
  width: 36px;
  height: 100%;
  display: flex;
  align-items: center;
  justify-content: center;
  border-right: 1px solid ${LINE};
`;

const PeriodList = styled.div`
  display: flex;
  gap: 13.5px;
  padding-left: 5px;
`;

const Period = styled.div<{ $active?: boolean }>`
  color: ${(p) => (p.$active ? "#00e6e6" : GRAY)};
  white-space: nowrap;
`;

const ToolGroup = styled.div`
  margin-left: auto;
  display: flex;
  height: 100%;
`;

const ToolButton = styled.div`
  width: 52.5px;
  display: flex;
  align-items: center;
  justify-content: center;
  border-left: 1px solid ${LINE};
  white-space: nowrap;
`;

const Pane = styled.div`
  position: relative;
  flex: none;
`;

const ChartSvg = styled.svg`
  display: block;
`;

const ChartText = styled.text`
  font-family: ${SANS};
  font-size: 18px;
`;

const PaneHeader = styled.div<{ $h: number }>`
  position: absolute;
  left: 0;
  top: 0;
  width: 1710px;
  height: ${(p) => p.$h}px;
  display: flex;
  align-items: center;
  padding-left: 3px;
  white-space: nowrap;
`;

const HeaderTitle = styled.div`
  width: 132px;
`;

const FormulaName = styled.div`
  width: 155px;
  margin-left: 4px;
`;

const Legend = styled.div<{ $w: number; $color: string }>`
  width: ${(p) => p.$w}px;
  color: ${(p) => p.$color};
  display: flex;
  align-items: center;
  font-size: 18px;
`;

const FlowMark = styled.svg`
  flex: none;
  margin-left: 3px;
`;

const CornerTools = styled.div`
  margin-left: auto;
  display: flex;
  align-items: center;
  gap: 8px;
  padding-right: 4px;
`;

const Diamond = styled.span`
  width: 11px;
  height: 11px;
  border: 1px solid #808080;
  transform: rotate(45deg);
`;

const VolName = styled.div`
  width: 132px;
  margin-left: 5px;
`;

const VolLegend = styled.div<{ $w: number; $color: string }>`
  width: ${(p) => p.$w}px;
  flex: none;
  color: ${(p) => p.$color};
  display: flex;
  align-items: center;
  letter-spacing: -0.2px;
`;

const HeaderMask = styled.div`
  position: absolute;
  left: 548px;
  top: 0;
  width: 1070px;
  height: 13px;
  background: #000;
`;

const DateRow = styled.div`
  position: relative;
  height: 24px;
  flex: none;
  display: flex;
  border-top: 2px solid #c00000;
  border-bottom: 1px solid ${LINE};
  color: #e02828;
`;

const DateTick = styled.span<{ $x: number }>`
  position: absolute;
  left: ${(p) => p.$x}px;
  top: 0;
  width: 1px;
  height: 4px;
  background: #c00000;
`;

const DateCell = styled.div<{ $w: number }>`
  width: ${(p) => p.$w}px;
  flex: none;
  padding: 2px 0 0 3px;
  line-height: 21px;
  border-right: 1px solid ${LINE};
  overflow: hidden;
  white-space: nowrap;
  &:first-of-type {
    padding-left: 6px;
  }
`;

const CursorDate = styled.div`
  width: 117px;
  flex: none;
  background: #000080;
  color: #c8c8c8;
  line-height: 22px;
  font-size: 17.5px;
  text-align: center;
  white-space: nowrap;
`;

const DateKind = styled.div`
  flex: 1;
  color: ${GRAY};
  text-align: center;
  line-height: 22px;
`;

const TabRow = styled.div`
  height: 26px;
  flex: none;
  display: flex;
  border-bottom: 2px solid ${LINE};
  white-space: nowrap;
`;

const TabCell = styled.div<{ $w: number; $color?: string }>`
  width: ${(p) => p.$w}px;
  display: flex;
  align-items: center;
  justify-content: center;
  padding-top: 2px;
  border-right: 2px solid ${LINE};
  color: ${(p) => p.$color || GRAY};
`;

const FitTabs = styled.div`
  margin-left: auto;
  display: flex;
`;

const Panel = styled.div`
  width: 335px;
  flex: none;
  display: flex;
  flex-direction: column;
  overflow: hidden;
  font-size: 20px;
`;

const PanelHead = styled.div`
  height: 86px;
  flex: none;
  border-bottom: 2px solid ${LINE};
`;

const NameRow = styled.div`
  height: 44px;
  display: flex;
  align-items: center;
  padding: 0 0 8px 54px;
`;

const BigName = styled.div`
  color: #00e6e6;
  font-size: 29px;
  font-weight: 700;
`;

const Code = styled.div`
  margin: 12px 0 0 5px;
  font-size: 20px;
  letter-spacing: 1px;
  color: #b0b0b0;
`;

const PriceRow = styled.div`
  height: 38px;
  display: flex;
  align-items: center;
  justify-content: space-between;
  padding: 0 6px 0 5px;
`;

const BigPrice = styled.div`
  display: flex;
  align-items: center;
  color: ${RED};
  font-size: 27px;
  font-weight: 700;
  letter-spacing: 1px;
`;

const Triangle = styled.span`
  font-size: 32px;
  line-height: 1;
  letter-spacing: 0;
`;

const QuoteRow = styled.div`
  height: 27px;
  flex: none;
  display: grid;
  grid-template-columns: 103px 55px 1fr;
  align-items: center;
  padding: 0 5px 2.5px 3px;
  line-height: 19px;
`;

const Label = styled.div<{ $tight?: boolean }>`
  color: ${GRAY};
  font-size: 22px;
  line-height: 27px;
  white-space: nowrap;
  letter-spacing: ${(p) => (p.$tight ? "-1.6px" : "0")};
`;

const QuoteLabel = styled(Label)`
  line-height: 19px;
`;

const Yuan = styled.span`
  margin-left: 4px;
  font-size: 20px;
`;

const Price = styled.div`
  color: ${RED};
  font-weight: 700;
  text-align: right;
`;

const Volume = styled.div<{ $color?: string }>`
  color: ${(p) => p.$color || OLIVE};
  font-weight: 700;
  text-align: right;
  white-space: nowrap;
`;

const WanMark = styled.span`
  font-size: 22px;
  font-weight: 400;
`;

const MidLine = styled.div`
  height: 2px;
  flex: none;
  background: linear-gradient(90deg, #94691f 87.8%, #1f5f9f 87.8%);
`;

const QuoteBlock = styled.div<{ $h: number; $pt?: number }>`
  height: ${(p) => p.$h}px;
  flex: none;
  padding-top: ${(p) => p.$pt || 0}px;
  border-bottom: 2px solid ${LINE};
`;

const StatRow = styled.div<{ $h: number }>`
  height: ${(p) => p.$h}px;
  display: grid;
  grid-template-columns: 72px 87px 60px 1fr;
  align-items: center;
  padding: 0 4px 0 3px;
  white-space: nowrap;
`;

const SecondLabel = styled(Label)`
  padding-left: 10px;
`;

const Stat = styled.div<{ $color: string }>`
  color: ${(p) => p.$color};
  font-weight: 700;
  text-align: right;
`;

const FlowRow = styled.div`
  height: 28.4px;
  display: grid;
  grid-template-columns: 139px 58px 73px 1fr;
  align-items: center;
  padding: 3px 3px 0;
  line-height: 20px;
  white-space: nowrap;
`;

const FlowLabel = styled.div`
  font-size: 23px;
  margin-left: 0;
`;

const FlowBar = styled.div`
  display: flex;
  align-items: center;
  height: 10px;
`;

const FlowFill = styled.div`
  height: 10px;
`;

const FlowValue = styled.div<{ $color: string }>`
  color: ${(p) => p.$color};
  font-size: 20.5px;
  font-weight: 700;
  text-align: right;
  white-space: nowrap;
`;

const TickList = styled.div`
  flex: 1;
  min-height: 0;
`;

const TickRow = styled.div`
  height: 27px;
  display: grid;
  grid-template-columns: 104px 56px 90px 48px 30px;
  align-items: center;
  padding: 2px 0 0 2px;
  line-height: 20px;
`;

const TickTime = styled.div`
  color: #b8b8b8;
  font-weight: 700;
  letter-spacing: 0.8px;
`;

const TickPrice = styled.div`
  color: ${RED};
  font-weight: 700;
  letter-spacing: 0.4px;
`;

const TickSide = styled.div<{ $buy: boolean }>`
  color: ${(p) => (p.$buy ? RED : GREEN)};
  text-align: center;
  font-weight: 700;
`;

const TickCount = styled.div`
  color: #989898;
  font-weight: 700;
  text-align: right;
`;

const Side = styled.div`
  flex: 1;
  display: flex;
  flex-direction: column;
  background: #f0f0f0;
  border-left: 1px solid #d8d8d8;
  overflow: hidden;
  padding-top: 0;
  > :first-child {
    margin-top: -3px;
  }
`;

const SideItem = styled.div<{ $active?: boolean }>`
  height: 34.6px;
  flex: none;
  display: flex;
  align-items: center;
  justify-content: center;
  margin: 0 1px;
  background: ${(p) => (p.$active ? "#fbfbfb" : "transparent")};
  border-top: ${(p) => (p.$active ? "2px solid #d0d0d0" : "0")};
  border-left: ${(p) => (p.$active ? "2px solid #d0d0d0" : "0")};
`;

const IconBox = styled.div<{ $text?: boolean; $color?: string }>`
  width: 23px;
  height: 23px;
  display: flex;
  align-items: center;
  justify-content: center;
  background: #fff;
  border: 2px solid #6ea2ee;
  color: ${(p) => p.$color || "#2040c0"};
  font-size: ${(p) => (p.$text ? "12.5px" : "15px")};
  letter-spacing: ${(p) => (p.$text ? "-0.5px" : "0")};
  white-space: nowrap;
  overflow: hidden;
`;

const RsiMark = styled.div`
  color: #2a3fb0;
  font-size: 14px;
  font-weight: 700;
  text-shadow: 1px 1px 0 #e080e0;
`;

const DollarMark = styled.div`
  color: #d02020;
  font-size: 22px;
  font-weight: 700;
  text-shadow: 1px 1px 1px #808080;
`;

const SideRule = styled.div`
  height: 12.4px;
  flex: none;
  margin: 0 3px;
  background: linear-gradient(#a8a8a8, #a8a8a8) center / 100% 1px no-repeat;
`;

const SideNum = styled.div`
  color: #2050a8;
  font-size: 15px;
`;

const SideChar = styled.div`
  color: #2050a8;
  font-size: 18px;
`;

const StatusBar = styled.div`
  height: 37px;
  flex: none;
  display: flex;
  align-items: center;
  padding-top: 2px;
  background: #f0f0f0;
  color: #202020;
  font-size: 21px;
  white-space: nowrap;
`;

const IndexIcon = styled.span`
  width: 20px;
  height: 20px;
  margin: 0 2px;
  background: linear-gradient(#f8e8a0, #f0b830);
  border: 2px solid #d89820;
  border-radius: 2px;
`;

const IndexCell = styled.div<{ $w: number; $color?: string; $cjk?: boolean }>`
  width: ${(p) => p.$w}px;
  flex: none;
  color: ${(p) => p.$color || (p.$cjk ? "#404040" : "#202020")};
  font-size: ${(p) => (p.$cjk ? "24px" : "21px")};
`;

const Thin = styled.span`
  font-size: 24px;
  color: #404040;
`;

const TotalLabel = styled.div`
  width: 87px;
  padding-left: 6px;
  border-left: 1px solid #b0b0b0;
  color: #404040;
  font-size: 23px;
`;

const Watermark = styled.div`
  position: absolute;
  left: 1360px;
  top: 1314px;
  width: 800px;
  height: 81px;
  display: flex;
  align-items: center;
  padding-left: 17px;
  background: #7fabdb;
`;

const WatermarkName = styled.div`
  width: 303px;
  color: #17078c;
  font-size: 56px;
  font-weight: 900;
  line-height: 1;
`;

const WatermarkUrl = styled.div`
  margin-left: 28px;
  color: #fff;
  font-family: "Liberation Serif", serif;
  font-size: 66px;
  font-weight: 700;
  line-height: 1;
  -webkit-text-stroke: 2px #fff;
  white-space: nowrap;
`;
